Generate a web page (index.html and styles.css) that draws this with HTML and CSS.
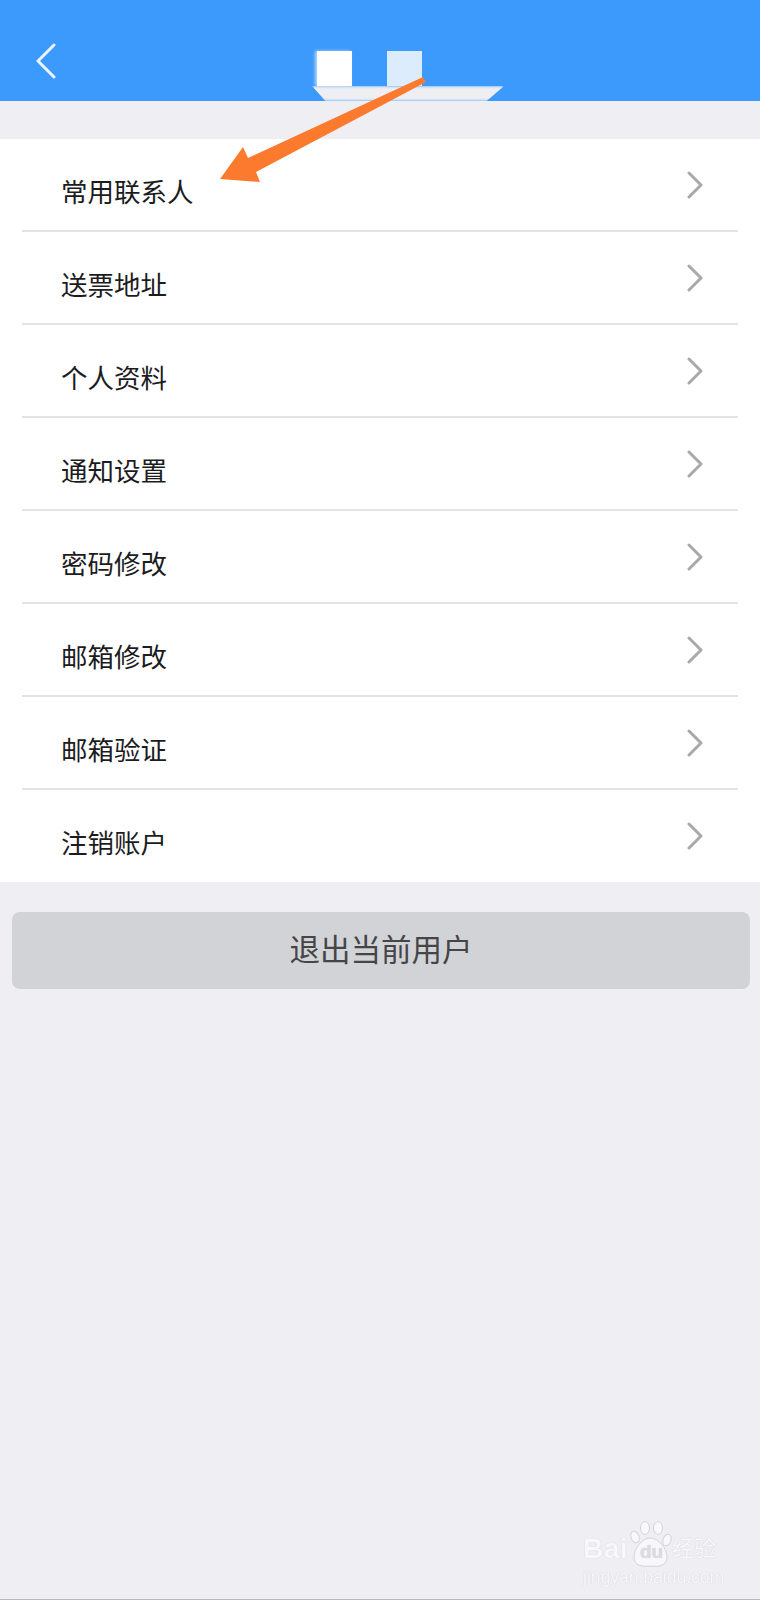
FILE: index.html
```html
<!DOCTYPE html>
<html lang="zh-CN">
<head>
	<meta charset="UTF-8">
	<title>账户设置</title>
	<link rel="stylesheet" href="styles.css">
</head>
<body>
	<div class="page">
		<div class="header">
			<svg class="back" width="22" height="36" viewBox="0 0 22 36"><path d="M19 2 L3 18 L19 34"/></svg>
			<div class="title">
				<i class="mark mark1"></i>
				<i class="mark mark2"></i>
			</div>
			<div class="smear"></div>
		</div>

		<ul class="list">
			<li><span>常用联系人</span><svg class="go" width="16" height="28" viewBox="0 0 16 28"><path d="M2 2 L14 14 L2 26"/></svg></li>
			<li><span>送票地址</span><svg class="go" width="16" height="28" viewBox="0 0 16 28"><path d="M2 2 L14 14 L2 26"/></svg></li>
			<li><span>个人资料</span><svg class="go" width="16" height="28" viewBox="0 0 16 28"><path d="M2 2 L14 14 L2 26"/></svg></li>
			<li><span>通知设置</span><svg class="go" width="16" height="28" viewBox="0 0 16 28"><path d="M2 2 L14 14 L2 26"/></svg></li>
			<li><span>密码修改</span><svg class="go" width="16" height="28" viewBox="0 0 16 28"><path d="M2 2 L14 14 L2 26"/></svg></li>
			<li><span>邮箱修改</span><svg class="go" width="16" height="28" viewBox="0 0 16 28"><path d="M2 2 L14 14 L2 26"/></svg></li>
			<li><span>邮箱验证</span><svg class="go" width="16" height="28" viewBox="0 0 16 28"><path d="M2 2 L14 14 L2 26"/></svg></li>
			<li><span>注销账户</span><svg class="go" width="16" height="28" viewBox="0 0 16 28"><path d="M2 2 L14 14 L2 26"/></svg></li>
		</ul>

		<div class="logout">退出当前用户</div>

		<!-- 标注箭头 -->
		<svg class="arrow" width="760" height="200" viewBox="0 0 760 200">
			<path d="M423 77 L426 82 L256 172 L260 182 L220 179 L243 147 L248 158 Z"/>
		</svg>

		<div class="water">
			<div class="water-top">
				<span class="w-bai">Bai</span>
				<svg class="paw" width="44" height="50" viewBox="0 0 44 50">
					<ellipse cx="6" cy="16" rx="4" ry="6" transform="rotate(-20 6 16)"/>
					<ellipse cx="16" cy="7" rx="4.5" ry="6.5"/>
					<ellipse cx="29" cy="7" rx="4.5" ry="6.5"/>
					<ellipse cx="38" cy="19" rx="4" ry="6" transform="rotate(20 38 19)"/>
					<path d="M21 17 C30 17 38 28 38 36 C38 45 30 46 22 45 C13 46 5 45 5 36 C5 28 13 17 21 17 Z"/>
				</svg>
				<span class="w-du">du</span>
				<span class="w-jy">经验</span>
			</div>
			<div class="water-url">jingyan.baidu.com</div>
		</div>

		<div class="bottom-line"></div>
	</div>
</body>
</html>
```

FILE: styles.css
```css
body,ul{ margin: 0;padding: 0; }
li{list-style: none;}
body{ background: #eeeef3; font-family: "Liberation Sans", "Noto Sans CJK SC", sans-serif; }
.page{ position: relative; width: 760px; height: 1600px; overflow: hidden; }

.header{ position: relative; height: 101px; background: #3d9afd; display: flex; align-items: flex-start; }
.back{ margin: 43px 0 0 35px; }
.back path{ fill: none; stroke: #eaf4ff; stroke-width: 3; stroke-linecap: round; stroke-linejoin: round; }
.title{ position: absolute; top: 51px; left: 317px; display: flex; gap: 35px; }
.mark{ display: block; width: 35px; height: 35px; background: #fff; }
.mark2{ background: #dcecfd; }
.mark1{ box-shadow: -2px 0 3px rgba(255,255,255,.6); }
.smear{ position: absolute; left: 312px; bottom: 0; width: 192px; height: 15px; background: #eeeef3; border-radius: 0 0 50% 50% / 0 0 0 0; clip-path: polygon(0 0, 100% 0, 91% 100%, 7% 100%); filter: blur(1.5px); }

.list{ margin-top: 38px; background: #fff; padding-bottom: 0; }
.list li{ display: flex; align-items: center; justify-content: space-between; height: 93px; box-sizing: border-box; margin: 0 22px; padding: 0 35px 0 39px; border-bottom: 2px solid #e3e3e5; color: #1c1c1e; font-size: 26.5px; }
.list li:last-child{ height: 92px; border-bottom: 0; }
.list li span{ padding-top: 16px; line-height: 30px; }
.go path{ fill: none; stroke: #a9a9ab; stroke-width: 3; stroke-linecap: round; stroke-linejoin: round; }

.logout{ margin: 30px 10px 0 12px; height: 77px; line-height: 76px; background: #d2d3d7; border-radius: 8px; text-align: center; color: #454548; font-size: 30.5px; }

.arrow{ position: absolute; left: 0; top: 0; }
.arrow path{ fill: #fc7a2d; }

.water{ position: absolute; left: 583px; top: 1525px; width: 140px; color: #f8f8fb; }
.water-top{ position: relative; height: 42px; }
.water-top span{ position: absolute; text-shadow: 0 0 1px #c9c9ce; }
.w-bai{ left: 0; top: 9px; font-size: 28px; font-weight: bold; line-height: 30px; letter-spacing: .5px; }
.paw{ position: absolute; left: 46px; top: -4px; }
.paw ellipse,.paw path{ fill: #f8f8fb; stroke: #d4d4d9; stroke-width: 1; }
.w-du{ left: 57px; top: 16px; font-size: 19px; font-weight: bold; line-height: 22px; color: #dcdce1; }
.w-jy{ left: 89px; top: 9px; font-size: 22px; line-height: 30px; white-space: nowrap; }
.water-url{ margin-top: 0; font-size: 17.5px; line-height: 20px; white-space: nowrap; text-shadow: 0 0 1px #c9c9ce; }

.bottom-line{ position: absolute; left: 0; right: 0; bottom: 0; height: 1px; background: #b9b9bd; }
```
